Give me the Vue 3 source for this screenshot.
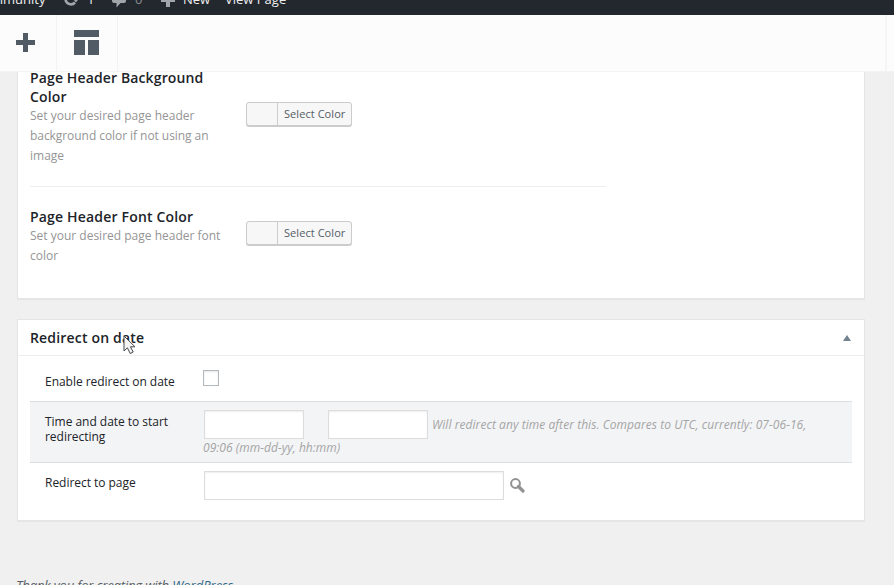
<script setup>
const options = [
  {
    id: 'background',
    title: ['Page Header Background', 'Color'],
    help: ['Set your desired page header', 'background color if not using an', 'image'],
  },
  { id: 'font', title: ['Page Header Font Color'], help: ['Set your desired page header font', 'color'] },
]
</script>

<template>
  <div class="page">
    <header class="adminbar">
      <div class="bar-row">
        <span class="site">mmunity</span>
        <svg class="refresh" width="16" height="16" viewBox="0 0 16 16"><path d="M2.500 8.500a5.500 5.500 0 0 0 9.500 3M13.500 7.500a5.500 5.500 0 0 0-9.500-3" fill="none" stroke="#a0a5aa" stroke-width="2.600"/><path d="M0 9l3-4 3.500 4zM9.500 7.500h6.500l-3 4z" fill="#a0a5aa"/></svg>
        <span class="updates">1</span>
        <svg class="bubble" width="14" height="16" viewBox="0 0 14 16"><path d="M2 1h10q2 0 2 2v6q0 2-2 2h-3.500l-4 4.500V11H2q-2 0-2-2V3q0-2 2-2z" fill="#a0a5aa"/></svg>
        <span class="comments">0</span>
        <svg class="new-icon" width="14" height="13" viewBox="0 0 14 13"><path d="M5 0h4v5h5v3H9v5H5V8H0V5h5z" fill="#a0a5aa"/></svg>
        <span class="new">New</span>
        <span class="view">View Page</span>
      </div>
    </header>
    <nav class="toolbar">
      <button class="tool add" aria-label="Add element"><svg width="19" height="19" viewBox="0 0 19 19"><path d="M7 0h5v7h7v5h-7v7H7v-7H0V7h7z" fill="#515b66"/></svg></button>
      <button class="tool layout" aria-label="Templates"><svg width="25" height="25" viewBox="0 0 25 25"><path d="M0 0h25v7H0zM0 10h11v15H0zM14 10h11v15H14z" fill="#515b66"/></svg></button>
      <div class="tool-space"></div>
      <div class="tool-end"></div>
    </nav>
    <main>
      <section class="card options">
        <div v-for="o in options" :key="o.id" class="option" :class="o.id">
          <div class="copy">
            <h3><span v-for="t in o.title" :key="t">{{ t }}</span></h3>
            <p><span v-for="t in o.help" :key="t">{{ t }}</span></p>
          </div>
          <button class="picker"><i></i><span>Select Color</span></button>
        </div>
      </section>
      <section class="card redirect">
        <div class="card-head">
          <h2>Redirect on date</h2>
          <svg width="8" height="6" viewBox="0 0 8 6"><path d="M4 0l4 6H0z" fill="#72828e"/></svg>
        </div>
        <div class="fields">
          <div class="field enable"><label><span>Enable redirect on date</span></label><div class="value"><div class="check"></div></div></div>
          <div class="field time">
            <label><span>Time and date to start</span><span>redirecting</span></label>
            <div class="value">
              <div class="line"><input class="short" aria-label="Date"><input class="short second" aria-label="Time"><em class="n1">Will redirect any time after this. Compares to UTC, currently: 07-06-16,</em></div>
              <em class="n2">09:06 (mm-dd-yy, hh:mm)</em>
            </div>
          </div>
          <div class="field target">
            <label><span>Redirect to page</span></label>
            <div class="value line"><input class="long" aria-label="Page"><svg class="search" width="15" height="15" viewBox="0 0 15 15"><circle cx="5.500" cy="5.500" r="4.400" fill="none" stroke="#929292" stroke-width="2"/><path d="M8.500 8.500L13 13" stroke="#929292" stroke-width="3.200" stroke-linecap="round"/></svg></div>
          </div>
        </div>
      </section>
      <footer><em><span>Thank you for creating with </span><a>WordPress</a>.</em></footer>
    </main>
    <svg class="cursor" width="13" height="20" viewBox="0 0 13 20"><path d="M1 1v15l3.400-3.200 2.800 5.700 3-1.500-2.800-5.200H12z" fill="#f4f4f4" stroke="#444b50"/></svg>
  </div>
</template>

<style>
body { margin: 0; overflow: hidden; background: #f0f0f0; }
</style>
<style scoped>
* { box-sizing: border-box; }
.page { position: relative; display: flex; flex-direction: column; height: 585px; overflow: hidden; font-family: "Open Sans", sans-serif; font-size: 12px; color: #202328; background: #f0f0f0; }
h2, h3, p { margin: 0; }
button { padding: 0; border: 0; font: inherit; }
svg { display: block; flex: none; }
.adminbar { flex: none; display: flex; align-items: flex-end; height: 15px; overflow: hidden; background: #23282f; color: #eee; font-size: 13px; }
.bar-row { display: flex; align-items: center; flex: none; height: 32px; white-space: nowrap; }
.site { width: 63px; text-indent: -9px; }
.refresh { margin-right: 8px; }
.updates { width: 25px; }
.bubble { margin-top: 2px; margin-right: 9px; }
.comments { width: 26px; color: #888d92; }
.new-icon { margin-top: 2px; margin-right: 8px; }
.new { width: 42px; }
.toolbar { flex: none; display: flex; height: 57px; border-bottom: 1px solid #f3f3f3; background: #fcfcfc; }
.tool { display: flex; align-items: center; background: none; border-right: 1px solid #f3f3f3; padding-bottom: 1px; }
.add { width: 57px; padding-left: 16px; }
.layout { width: 61px; padding-left: 17px; }
.tool-space { flex: 1; }
.tool-end { width: 9px; border-left: 2px solid #f5f5f5; }
main { flex: 1; min-height: 0; overflow: hidden; padding: 0 29px 0 17px; }
.card { border: 1px solid #e5e5e5; background: #fff; box-shadow: 0 1px 1px rgba(0,0,0,.04); }
.options { height: 227px; border-top: 0; padding-left: 12px; }
.option { display: flex; width: 576px; }
.background { height: 115px; border-bottom: 1px solid #eee; }
.font { padding-top: 20px; }
.copy { width: 216px; }
.background .copy { margin-top: -4px; }
h3, h2 { font-size: 14px; font-weight: 600; line-height: 19px; letter-spacing: .18px; }
.background h3 { letter-spacing: .13px; }
h3 span, p span { display: block; width: max-content; white-space: nowrap; }
p { color: #959595; font-size: 12px; line-height: 20px; }
.background p span:nth-child(2) { letter-spacing: -.06px; }
.picker { display: flex; width: 106px; height: 24px; margin-top: 30px; border: 1px solid #ccc; border-radius: 3px; background: #f7f7f7; box-shadow: 0 1px 0 #ccc; color: #555d66; font-size: 11px; line-height: 22px; overflow: hidden; }
.font .picker { margin-top: 14px; }
.picker i { width: 31px; align-self: stretch; border-right: 1px solid #ccc; }
.picker span { padding-left: 6px; white-space: nowrap; letter-spacing: .06px; }
.redirect { margin-top: 20px; height: 202px; }
.card-head { display: flex; align-items: center; justify-content: space-between; height: 36px; padding: 0 13px 0 12px; border-bottom: 1px solid #eee; }
.fields { padding: 0 12px; }
.field { display: flex; padding-left: 15px; }
label { width: 158px; line-height: 15px; padding-top: 4px; letter-spacing: -.03px; }
label span { display: block; width: max-content; }
.enable { height: 45px; padding-top: 14px; }
.check { width: 16px; height: 16px; border: 1px solid #b4b9be; background: #fff; box-shadow: inset 0 1px 2px rgba(0,0,0,.1); }
.time { height: 62px; border: solid #dcdee0; border-width: 1px 0; background: #f3f4f6; padding-top: 8px; }
.line { display: flex; align-items: center; }
input { display: block; margin: 0; padding: 0; height: 29px; border: 1px solid #ddd; background: #fff; box-shadow: inset 0 1px 2px rgba(0,0,0,.07); border-radius: 0; }
.short { width: 100px; margin-left: 1px; }
.second { margin-left: 24px; }
em { color: #a5a5a5; white-space: nowrap; }
.n1 { margin-left: 4px; line-height: 18px; letter-spacing: .055px; }
.n2 { display: block; line-height: 18px; letter-spacing: .03px; }
.target { padding-top: 8px; }
.long { width: 300px; margin-left: 1px; }
.search { margin-left: 6px; }
footer { margin-top: 54px; margin-left: -1px; line-height: 20px; font-size: 13px; }
footer em { color: #555d66; }
footer span { letter-spacing: -.15px; }
footer a { color: #316987; text-decoration: none; }
.cursor { position: absolute; left: 123px; top: 335px; }
</style>
